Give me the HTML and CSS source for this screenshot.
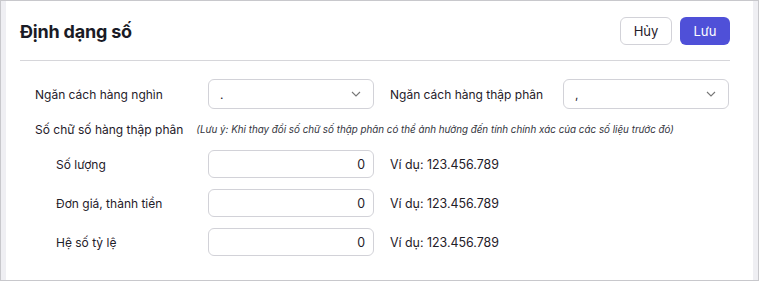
FILE: index.html
```html
<!DOCTYPE html>
<html lang="vi">
<head>
  <meta charset="UTF-8">
  <meta name="viewport" content="width=device-width, initial-scale=1.0">
  <title>Định dạng số</title>
  <link rel="stylesheet" href="styles.css">
</head>
<body>

  <div class="frame">
    <div class="dialog">

      <div class="header">
        <h1>Định dạng số</h1>
        <div class="actions">
          <button class="btn btn-cancel">Hủy</button>
          <button class="btn btn-save">Lưu</button>
        </div>
      </div>

      <div class="form">
        <div class="row">
          <div class="label">Ngăn cách hàng nghìn</div>
          <div class="select">
            <span>.</span>
            <svg class="chevron" width="10" height="6" viewBox="0 0 10 6"><path d="M1 1l4 4 4-4" fill="none" stroke="#777" stroke-width="1.1"/></svg>
          </div>
          <div class="label label-right">Ngăn cách hàng thập phân</div>
          <div class="select">
            <span>,</span>
            <svg class="chevron" width="10" height="6" viewBox="0 0 10 6"><path d="M1 1l4 4 4-4" fill="none" stroke="#777" stroke-width="1.1"/></svg>
          </div>
        </div>

        <div class="row-title">
          <div class="label-auto">Số chữ số hàng thập phân</div>
          <div class="note">(Lưu ý: Khi thay đổi số chữ số thập phân có thể ảnh hưởng đến tính chính xác của các số liệu trước đó)</div>
        </div>

        <div class="sub-row">
          <div class="sub-label">Số lượng</div>
          <div class="input">0</div>
          <div class="example">Ví dụ: 123.456.789</div>
        </div>
        <div class="sub-row">
          <div class="sub-label">Đơn giá, thành tiền</div>
          <div class="input">0</div>
          <div class="example">Ví dụ: 123.456.789</div>
        </div>
        <div class="sub-row">
          <div class="sub-label">Hệ số tỷ lệ</div>
          <div class="input">0</div>
          <div class="example">Ví dụ: 123.456.789</div>
        </div>
      </div>

    </div>
  </div>

</body>
</html>
```

FILE: styles.css
```css
* {
  margin: 0;
  padding: 0;
  box-sizing: border-box;
}

body {
  font-family: Inter, "Noto Sans", sans-serif;
  background: #fff;
  color: #1f2029;
}

.frame {
  height: 281px;
  border: 1px solid #c8c8cc;
  background: #efeff3;
  padding: 0 5px;
}

.dialog {
  background: #fff;
  height: 100%;
  padding: 16px 23px 0 14px;
}

.header {
  display: flex;
  justify-content: space-between;
  align-items: center;
  padding-bottom: 15px;
  border-bottom: 1px solid #d6d6da;
}

h1 {
  font-size: 18px;
  font-weight: 700;
  letter-spacing: -0.2px;
  color: #1a1b26;
}

.actions {
  display: flex;
  gap: 8px;
}

.btn {
  height: 28px;
  border-radius: 6px;
  font-family: Inter, sans-serif;
  font-size: 13px;
  cursor: pointer;
}

.btn-cancel {
  width: 52px;
  background: #fff;
  border: 1px solid #d2d2d8;
  color: #1f2029;
}

.btn-save {
  width: 50px;
  background: #4f50d8;
  border: none;
  color: #fff;
}

.form {
  padding: 18px 0 0 15px;
  font-size: 12px;
}

.row {
  display: flex;
  align-items: center;
  height: 30px;
}

.label {
  width: 173px;
}

.label-right {
  margin-left: 16px;
}

.select {
  width: 166px;
  height: 30px;
  border: 1px solid #d2d2d8;
  border-radius: 6px;
  display: flex;
  align-items: center;
  justify-content: space-between;
  padding: 0 12px 0 11px;
}

.chevron {
  display: block;
}

.row-title {
  display: flex;
  align-items: center;
  gap: 13px;
  height: 20px;
  margin-top: 10px;
}

.note {
  font-size: 9.8px;
  font-style: italic;
  color: #33343d;
}

.sub-row {
  display: flex;
  align-items: center;
  height: 28px;
  margin-top: 11px;
  padding-left: 21px;
}

.sub-row:first-of-type {
  margin-top: 12px;
}

.sub-label {
  width: 152px;
}

.input {
  width: 166px;
  height: 28px;
  border: 1px solid #d2d2d8;
  border-radius: 6px;
  display: flex;
  align-items: center;
  justify-content: flex-end;
  padding-right: 8px;
  font-size: 12.4px;
}

.example {
  margin-left: 16px;
  font-size: 12.4px;
}
```
